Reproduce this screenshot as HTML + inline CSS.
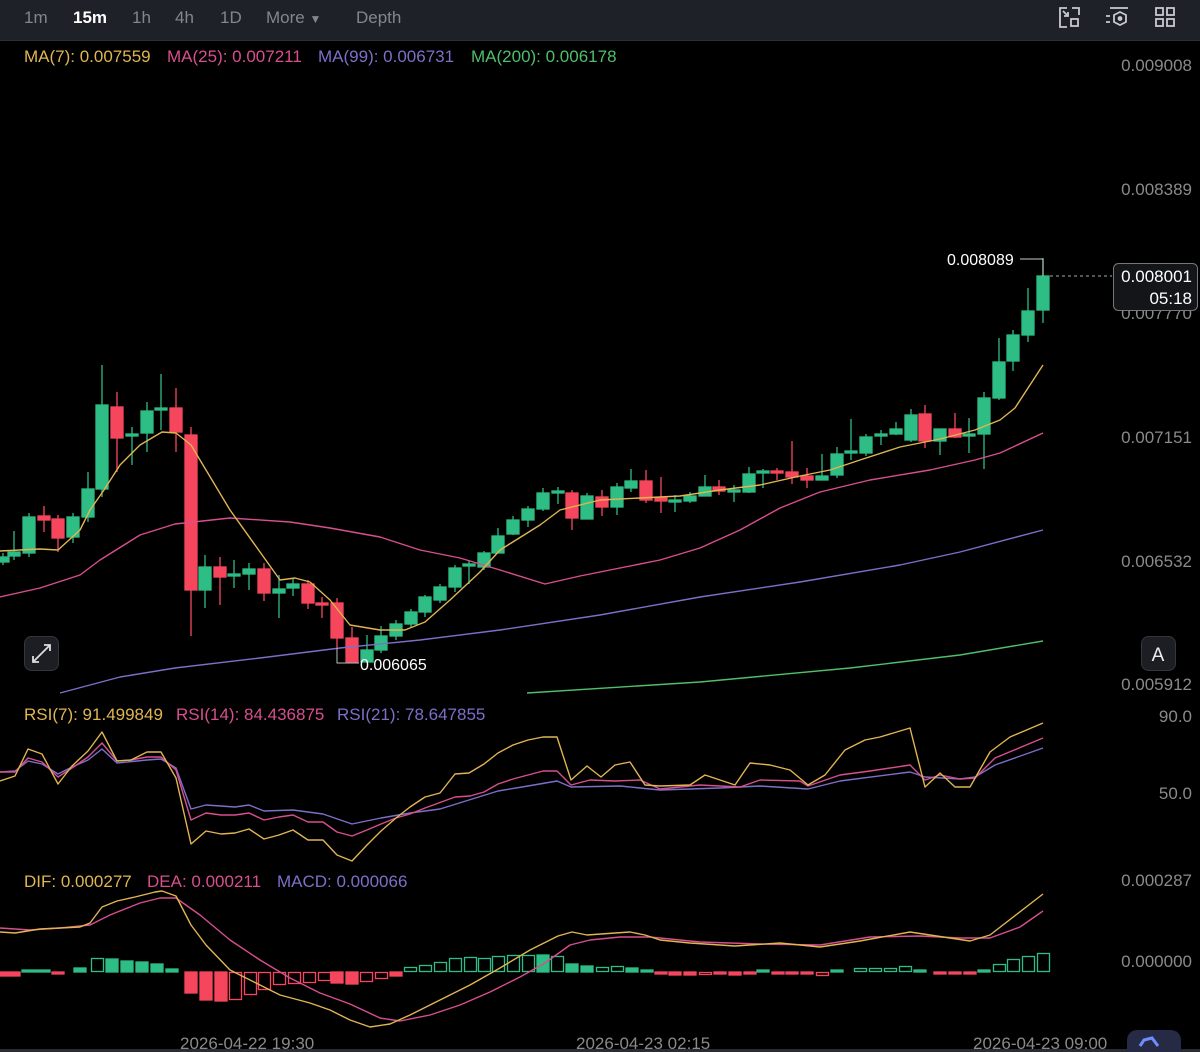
<!DOCTYPE html>
<html><head><meta charset="utf-8"><style>
html,body{margin:0;padding:0;background:#000;width:1200px;height:1052px;overflow:hidden;font-family:"Liberation Sans",sans-serif}
.top{position:absolute;left:0;top:0;width:1200px;height:40px;background:#1f2128;border-bottom:1px solid #2c2e35}
.top span{position:absolute;top:8px;font-size:17px;color:#83868d}
svg{position:absolute;left:0;top:0}
</style></head><body>
<div class="top">
<span style="left:24px">1m</span>
<span style="left:73px;color:#fff;font-weight:bold">15m</span>
<span style="left:132px">1h</span>
<span style="left:175px">4h</span>
<span style="left:220px">1D</span>
<span style="left:266px">More <span style="position:static;font-size:12px">▼</span></span>
<span style="left:356px">Depth</span>
<svg width="1200" height="40" viewBox="0 0 1200 40" fill="none" stroke="#c8cad0" stroke-width="1.8">
<path d="M1067 8 H1060 V27 H1067 M1072 8 H1079 V15"/><rect x="1071" y="19" width="7" height="7"/><path d="M1063 11 L1068 16 M1064 16 H1068 V12"/>
<path d="M1110 8 H1128 M1106 16 H1110 M1106 22 H1110"/><path d="M1120 12 L1126 15 V22 L1120 25 L1114 22 V15 Z"/><circle cx="1120" cy="18.5" r="1.5" fill="#c8cad0"/>
<rect x="1156" y="8" width="7" height="7"/><rect x="1167" y="8" width="7" height="7"/><rect x="1156" y="19" width="7" height="7"/><rect x="1167" y="19" width="7" height="7"/>
</svg>
</div>
<svg width="1200" height="1052" viewBox="0 0 1200 1052" style="top:0">
<g font-size="17" fill="#8a8a8a" text-anchor="end" font-family="Liberation Sans, sans-serif">
<text x="1192" y="71">0.009008</text><text x="1192" y="195">0.008389</text><text x="1192" y="319">0.007770</text>
<text x="1192" y="443">0.007151</text><text x="1192" y="567">0.006532</text><text x="1192" y="690">0.005912</text>
<text x="1192" y="722">90.0</text><text x="1192" y="799">50.0</text>
<text x="1192" y="886">0.000287</text><text x="1192" y="967">0.000000</text>
</g>
<g font-size="17" font-family="Liberation Sans, sans-serif">
<text x="24" y="62" fill="#e0b552">MA(7): 0.007559</text>
<text x="167" y="62" fill="#d74f8f">MA(25): 0.007211</text>
<text x="318" y="62" fill="#7d6fc8">MA(99): 0.006731</text>
<text x="471" y="62" fill="#4fbf6a">MA(200): 0.006178</text>
<text x="24" y="720" fill="#e0b552">RSI(7): 91.499849</text>
<text x="176" y="720" fill="#d74f8f">RSI(14): 84.436875</text>
<text x="337" y="720" fill="#7d6fc8">RSI(21): 78.647855</text>
<text x="24" y="887" fill="#e0b552">DIF: 0.000277</text>
<text x="147" y="887" fill="#d74f8f">DEA: 0.000211</text>
<text x="277" y="887" fill="#7d6fc8">MACD: 0.000066</text>
<text x="180" y="1049" fill="#8a8a8a">2026-04-22 19:30</text>
<text x="576" y="1049" fill="#8a8a8a">2026-04-23 02:15</text>
<text x="973" y="1049" fill="#8a8a8a">2026-04-23 09:00</text>
</g>
<g stroke-width="1.3">
<g fill="#2ebd85" stroke="#2ebd85">
<line x1="3" y1="553" x2="3" y2="565"/><rect x="-3" y="557" width="12" height="5"/>
<line x1="14" y1="531" x2="14" y2="560"/><rect x="8" y="552" width="12" height="4"/>
<line x1="29" y1="513" x2="29" y2="557"/><rect x="23" y="517" width="12" height="36"/>
<line x1="73" y1="513" x2="73" y2="543"/><rect x="67" y="517" width="12" height="20"/>
<line x1="88" y1="472" x2="88" y2="522"/><rect x="82" y="489" width="12" height="28"/>
<line x1="102" y1="365" x2="102" y2="497"/><rect x="96" y="405" width="12" height="84"/>
<line x1="132" y1="427" x2="132" y2="465"/><rect x="126" y="434" width="12" height="2"/>
<line x1="147" y1="402" x2="147" y2="452"/><rect x="141" y="411" width="12" height="22"/>
<line x1="161" y1="374" x2="161" y2="430"/><rect x="155" y="408" width="12" height="2"/>
<line x1="205" y1="555" x2="205" y2="608"/><rect x="199" y="567" width="12" height="23"/>
<line x1="234" y1="560" x2="234" y2="588"/><rect x="228" y="574" width="12" height="2"/>
<line x1="249" y1="563" x2="249" y2="590"/><rect x="243" y="569" width="12" height="5"/>
<line x1="279" y1="575" x2="279" y2="618"/><rect x="273" y="589" width="12" height="4"/>
<line x1="293" y1="578" x2="293" y2="596"/><rect x="287" y="584" width="12" height="4"/>
<line x1="367" y1="635" x2="367" y2="663"/><rect x="361" y="650" width="12" height="12"/>
<line x1="381" y1="626" x2="381" y2="653"/><rect x="375" y="636" width="12" height="14"/>
<line x1="396" y1="620" x2="396" y2="640"/><rect x="390" y="624" width="12" height="12"/>
<line x1="411" y1="609" x2="411" y2="627"/><rect x="405" y="612" width="12" height="12"/>
<line x1="425" y1="595" x2="425" y2="617"/><rect x="419" y="597" width="12" height="15"/>
<line x1="440" y1="584" x2="440" y2="603"/><rect x="434" y="587" width="12" height="13"/>
<line x1="455" y1="565" x2="455" y2="592"/><rect x="449" y="568" width="12" height="19"/>
<line x1="469" y1="560" x2="469" y2="584"/><rect x="463" y="564" width="12" height="2"/>
<line x1="484" y1="551" x2="484" y2="570"/><rect x="478" y="553" width="12" height="14"/>
<line x1="498" y1="528" x2="498" y2="553"/><rect x="492" y="536" width="12" height="17"/>
<line x1="513" y1="516" x2="513" y2="535"/><rect x="507" y="520" width="12" height="14"/>
<line x1="528" y1="506" x2="528" y2="527"/><rect x="522" y="509" width="12" height="11"/>
<line x1="543" y1="488" x2="543" y2="511"/><rect x="537" y="493" width="12" height="16"/>
<line x1="558" y1="487" x2="558" y2="504"/><rect x="552" y="491" width="12" height="2"/>
<line x1="587" y1="493" x2="587" y2="519"/><rect x="581" y="496" width="12" height="23"/>
<line x1="617" y1="483" x2="617" y2="515"/><rect x="611" y="487" width="12" height="20"/>
<line x1="631" y1="469" x2="631" y2="492"/><rect x="625" y="481" width="12" height="7"/>
<line x1="675" y1="495" x2="675" y2="512"/><rect x="669" y="500" width="12" height="2"/>
<line x1="690" y1="492" x2="690" y2="503"/><rect x="684" y="496" width="12" height="5"/>
<line x1="705" y1="475" x2="705" y2="496"/><rect x="699" y="487" width="12" height="9"/>
<line x1="734" y1="485" x2="734" y2="502"/><rect x="728" y="490" width="12" height="2"/>
<line x1="749" y1="467" x2="749" y2="493"/><rect x="743" y="474" width="12" height="18"/>
<line x1="763" y1="469" x2="763" y2="488"/><rect x="757" y="471" width="12" height="2"/>
<line x1="822" y1="454" x2="822" y2="480"/><rect x="816" y="476" width="12" height="4"/>
<line x1="837" y1="447" x2="837" y2="478"/><rect x="831" y="454" width="12" height="21"/>
<line x1="851" y1="419" x2="851" y2="460"/><rect x="845" y="451" width="12" height="2"/>
<line x1="866" y1="434" x2="866" y2="456"/><rect x="860" y="437" width="12" height="16"/>
<line x1="881" y1="430" x2="881" y2="445"/><rect x="875" y="434" width="12" height="2"/>
<line x1="896" y1="422" x2="896" y2="435"/><rect x="890" y="429" width="12" height="5"/>
<line x1="911" y1="409" x2="911" y2="442"/><rect x="905" y="415" width="12" height="25"/>
<line x1="940" y1="429" x2="940" y2="455"/><rect x="934" y="429" width="12" height="12"/>
<line x1="969" y1="418" x2="969" y2="453"/><rect x="963" y="434" width="12" height="2"/>
<line x1="984" y1="392" x2="984" y2="469"/><rect x="978" y="398" width="12" height="36"/>
<line x1="999" y1="338" x2="999" y2="400"/><rect x="993" y="362" width="12" height="36"/>
<line x1="1013" y1="330" x2="1013" y2="371"/><rect x="1007" y="335" width="12" height="26"/>
<line x1="1028" y1="288" x2="1028" y2="342"/><rect x="1022" y="311" width="12" height="24"/>
<line x1="1043" y1="258" x2="1043" y2="323"/><rect x="1037" y="276" width="12" height="34"/>
</g>
<g fill="#f6465d" stroke="#f6465d">
<line x1="44" y1="506" x2="44" y2="532"/><rect x="38" y="516" width="12" height="4"/>
<line x1="58" y1="515" x2="58" y2="552"/><rect x="52" y="519" width="12" height="19"/>
<line x1="117" y1="392" x2="117" y2="472"/><rect x="111" y="407" width="12" height="31"/>
<line x1="176" y1="388" x2="176" y2="452"/><rect x="170" y="408" width="12" height="24"/>
<line x1="191" y1="427" x2="191" y2="636"/><rect x="185" y="435" width="12" height="155"/>
<line x1="220" y1="557" x2="220" y2="605"/><rect x="214" y="567" width="12" height="10"/>
<line x1="264" y1="563" x2="264" y2="601"/><rect x="258" y="569" width="12" height="24"/>
<line x1="308" y1="580" x2="308" y2="609"/><rect x="302" y="584" width="12" height="19"/>
<line x1="322" y1="597" x2="322" y2="618"/><rect x="316" y="603" width="12" height="2"/>
<line x1="337" y1="598" x2="337" y2="648"/><rect x="331" y="603" width="12" height="35"/>
<line x1="352" y1="627" x2="352" y2="662"/><rect x="346" y="638" width="12" height="24"/>
<line x1="572" y1="490" x2="572" y2="530"/><rect x="566" y="493" width="12" height="25"/>
<line x1="602" y1="490" x2="602" y2="516"/><rect x="596" y="497" width="12" height="10"/>
<line x1="646" y1="470" x2="646" y2="503"/><rect x="640" y="481" width="12" height="19"/>
<line x1="661" y1="477" x2="661" y2="513"/><rect x="655" y="498" width="12" height="3"/>
<line x1="719" y1="480" x2="719" y2="495"/><rect x="713" y="487" width="12" height="4"/>
<line x1="777" y1="468" x2="777" y2="480"/><rect x="771" y="471" width="12" height="2"/>
<line x1="792" y1="441" x2="792" y2="484"/><rect x="786" y="472" width="12" height="5"/>
<line x1="807" y1="468" x2="807" y2="488"/><rect x="801" y="476" width="12" height="4"/>
<line x1="925" y1="405" x2="925" y2="448"/><rect x="919" y="414" width="12" height="27"/>
<line x1="955" y1="413" x2="955" y2="438"/><rect x="949" y="429" width="12" height="8"/>
</g>
</g>
<g fill="none" stroke-width="1.4" stroke-linejoin="round">
<polyline stroke="#4fbf6a" points="527,693 700,682 850,668 960,655 1043,641"/>
<polyline stroke="#7d6fc8" points="60,693 120,677 175,668 260,658 340,648 420,640 500,630 600,615 700,597 800,582 900,565 960,552 1043,530"/>
<polyline stroke="#d74f8f" points="0,597 40,588 80,575 100,560 140,535 175,524 230,518 290,522 330,528 380,537 420,550 460,558 500,570 545,584 580,576 620,568 660,560 700,548 740,530 780,508 820,492 870,480 930,470 975,460 1000,453 1043,433"/>
<polyline stroke="#e0b552" points="0,551 40,549 58,550 80,530 90,510 104,490 120,465 140,445 162,432 176,433 191,445 230,510 280,580 295,578 310,582 330,600 350,625 380,630 405,630 425,622 450,600 480,572 500,550 540,525 560,510 600,500 640,498 680,496 720,490 760,485 800,476 830,470 860,460 900,447 940,439 975,430 1000,420 1015,408 1043,365"/>
</g>
<path d="M1020 259 H1043 V276" stroke="#ccc" fill="none"/>
<text x="947" y="265" fill="#fff" font-size="16" font-family="Liberation Sans, sans-serif">0.008089</text>
<line x1="1050" y1="276" x2="1112" y2="276" stroke="#aaa" stroke-dasharray="3,3"/>
<rect x="1113.5" y="263.5" width="84" height="47" rx="5" fill="#141519" stroke="#777"/>
<text x="1192" y="282" fill="#fff" font-size="17" text-anchor="end" font-family="Liberation Sans, sans-serif">0.008001</text>
<text x="1192" y="304" fill="#fff" font-size="17" text-anchor="end" font-family="Liberation Sans, sans-serif">05:18</text>
<path d="M337 648 V663 H359" stroke="#bbb" fill="none"/>
<text x="360" y="670" fill="#fff" font-size="16" font-family="Liberation Sans, sans-serif">0.006065</text>
<rect x="24.5" y="636.5" width="34" height="34" rx="7" fill="#1c1e24" stroke="#34363c"/>
<path d="M33 662 L50 645 M44 645 H50 V651 M33 656 V662 H39" stroke="#ddd" stroke-width="1.8" fill="none"/>
<rect x="1141.5" y="636.5" width="34" height="34" rx="7" fill="#1c1e24" stroke="#34363c"/>
<text x="1158" y="661" fill="#eee" font-size="19" text-anchor="middle" font-family="Liberation Sans, sans-serif">A</text>
<g fill="none" stroke-width="1.4" stroke-linejoin="round">
<polyline stroke="#7d6fc8" points="0,772 15,771 28,761 42,764 58,774 72,767 88,760 102,749 117,763 147,760 161,759 176,768 191,809 206,805 235,807 249,805 264,811 293,810 323,814 352,824 381,818 410,813 440,809 469,800 498,791 528,786 557,781 571,787 620,786 660,790 720,788 760,786 808,789 840,781 910,772 925,777 960,779 975,777 995,765 1043,748"/>
<polyline stroke="#d74f8f" points="0,772 15,772 28,758 42,762 58,777 72,768 88,757 102,743 117,761 131,760 147,757 161,757 176,770 191,820 206,813 221,815 235,815 249,813 264,820 279,817 293,815 308,822 323,822 337,832 352,836 367,830 381,824 396,818 410,814 425,808 455,797 470,796 484,792 498,784 513,779 528,775 543,771 557,771 571,785 590,780 615,781 640,780 660,789 700,785 740,787 760,780 800,781 808,786 840,775 870,771 910,765 925,780 940,775 960,779 975,778 995,758 1043,738"/>
<polyline stroke="#e0b552" points="0,781 15,776 28,749 42,754 58,784 72,766 88,751 102,732 117,761 131,760 147,752 161,752 176,778 191,844 206,831 221,834 235,833 249,829 264,839 279,835 293,830 308,840 323,840 337,855 352,861 367,845 381,831 396,818 410,807 425,797 440,793 455,774 469,773 484,764 498,753 513,745 528,740 543,737 557,737 571,780 587,766 601,777 615,765 630,762 645,785 660,786 690,785 705,775 720,780 735,785 750,763 770,765 790,770 808,785 825,775 845,750 865,740 880,737 910,728 925,787 940,773 955,787 970,787 990,752 1010,737 1043,723"/>
</g>
<g stroke-width="1.3">
<g fill="#2ebd85" stroke="#2ebd85">
<rect x="22" y="970" width="28" height="2"/><rect x="74" y="968" width="12" height="4"/>
<rect x="106" y="959" width="12" height="13"/><rect x="121" y="961" width="12" height="11"/><rect x="136" y="962" width="12" height="10"/><rect x="151" y="964" width="12" height="8"/><rect x="166" y="969" width="12" height="3"/>
<rect x="537" y="955" width="12" height="17"/><rect x="566" y="964" width="12" height="8"/><rect x="581" y="966" width="12" height="6"/>
<rect x="626" y="968" width="12" height="4"/><rect x="641" y="970" width="12" height="2"/><rect x="757" y="970" width="12" height="2"/><rect x="831" y="970" width="12" height="2"/><rect x="914" y="970" width="12" height="2"/><rect x="978" y="970" width="12" height="2"/>
</g>
<g fill="none" stroke="#2ebd85">
<rect x="91.5" y="958.5" width="12" height="13"/>
<rect x="404.5" y="967.5" width="12" height="4"/><rect x="419.5" y="965.5" width="12" height="6"/><rect x="434.5" y="962.5" width="12" height="9"/><rect x="449.5" y="958.5" width="12" height="13"/><rect x="464.5" y="957.5" width="12" height="14"/><rect x="478.5" y="958.5" width="12" height="13"/><rect x="492.5" y="956.5" width="12" height="15"/><rect x="507.5" y="955.5" width="12" height="16"/><rect x="522.5" y="955.5" width="12" height="16"/><rect x="551.5" y="956.5" width="12" height="15"/>
<rect x="596.5" y="967.5" width="12" height="4"/><rect x="611.5" y="966.5" width="12" height="5"/>
<rect x="854.5" y="968.5" width="12" height="3"/><rect x="869.5" y="968.5" width="12" height="3"/><rect x="884.5" y="968.5" width="12" height="3"/><rect x="899.5" y="966.5" width="12" height="5"/>
<rect x="993.5" y="964.5" width="12" height="7"/><rect x="1007.5" y="959.5" width="12" height="12"/><rect x="1022.5" y="956.5" width="12" height="15"/><rect x="1037.5" y="953.5" width="12" height="18"/>
</g>
<g fill="#f6465d" stroke="#f6465d">
<rect x="0" y="972" width="20" height="4"/><rect x="52" y="972" width="12" height="2"/>
<rect x="185" y="972" width="12" height="21"/><rect x="200" y="972" width="12" height="28"/><rect x="215" y="972" width="12" height="29"/>
<rect x="331" y="972" width="12" height="11"/><rect x="346" y="972" width="12" height="12"/><rect x="390" y="972" width="12" height="4"/>
<rect x="655" y="972" width="12" height="2"/><rect x="669" y="972" width="12" height="3"/><rect x="684" y="972" width="12" height="3"/><rect x="714" y="972" width="12" height="2"/><rect x="729" y="972" width="12" height="3"/><rect x="744" y="972" width="12" height="2"/><rect x="772" y="972" width="12" height="2"/><rect x="786" y="972" width="12" height="2"/><rect x="801" y="972" width="12" height="2"/>
<rect x="934" y="972" width="12" height="2"/><rect x="949" y="972" width="12" height="2"/><rect x="964" y="972" width="12" height="2"/>
</g>
<g fill="none" stroke="#f6465d">
<rect x="229.5" y="972.5" width="12" height="27"/><rect x="244.5" y="972.5" width="12" height="22"/><rect x="258.5" y="972.5" width="12" height="17"/><rect x="273.5" y="972.5" width="12" height="12"/><rect x="288.5" y="972.5" width="12" height="11"/><rect x="303.5" y="972.5" width="12" height="10"/><rect x="318.5" y="972.5" width="12" height="8"/><rect x="360.5" y="972.5" width="12" height="9"/><rect x="375.5" y="972.5" width="12" height="6"/>
<rect x="699.5" y="972.5" width="12" height="2"/><rect x="816.5" y="972.5" width="12" height="3"/>
</g>
</g>
<g fill="none" stroke-width="1.4" stroke-linejoin="round">
<polyline stroke="#d74f8f" points="0,928 30,930 60,928 90,925 110,915 140,903 160,898 176,898 200,915 230,940 260,960 290,978 320,993 350,1004 380,1018 400,1021 430,1015 460,1005 490,992 520,977 545,963 570,945 590,940 620,937 650,937 700,942 760,944 820,945 870,937 920,936 960,938 990,938 1020,927 1043,911"/>
<polyline stroke="#e0b552" points="0,932 15,933 40,929 80,927 90,923 102,907 117,901 135,897 155,892 162,891 176,896 191,925 206,945 230,970 260,985 280,995 310,1003 330,1010 350,1020 370,1027 390,1024 410,1015 440,1000 470,985 500,968 530,950 558,936 572,932 587,935 615,933 630,932 645,935 660,940 690,943 735,946 780,943 820,947 860,941 910,932 970,941 990,935 1043,894"/>
</g>
<rect x="0" y="1049" width="1200" height="3" fill="#2a2c33"/>
<rect x="1127" y="1030" width="54" height="30" rx="10" fill="#262a45"/>
<path d="M1140 1046 L1144 1040 L1152 1038 L1158 1046" stroke="#6f8cff" stroke-width="3" fill="none"/>
</svg>
</body></html>
